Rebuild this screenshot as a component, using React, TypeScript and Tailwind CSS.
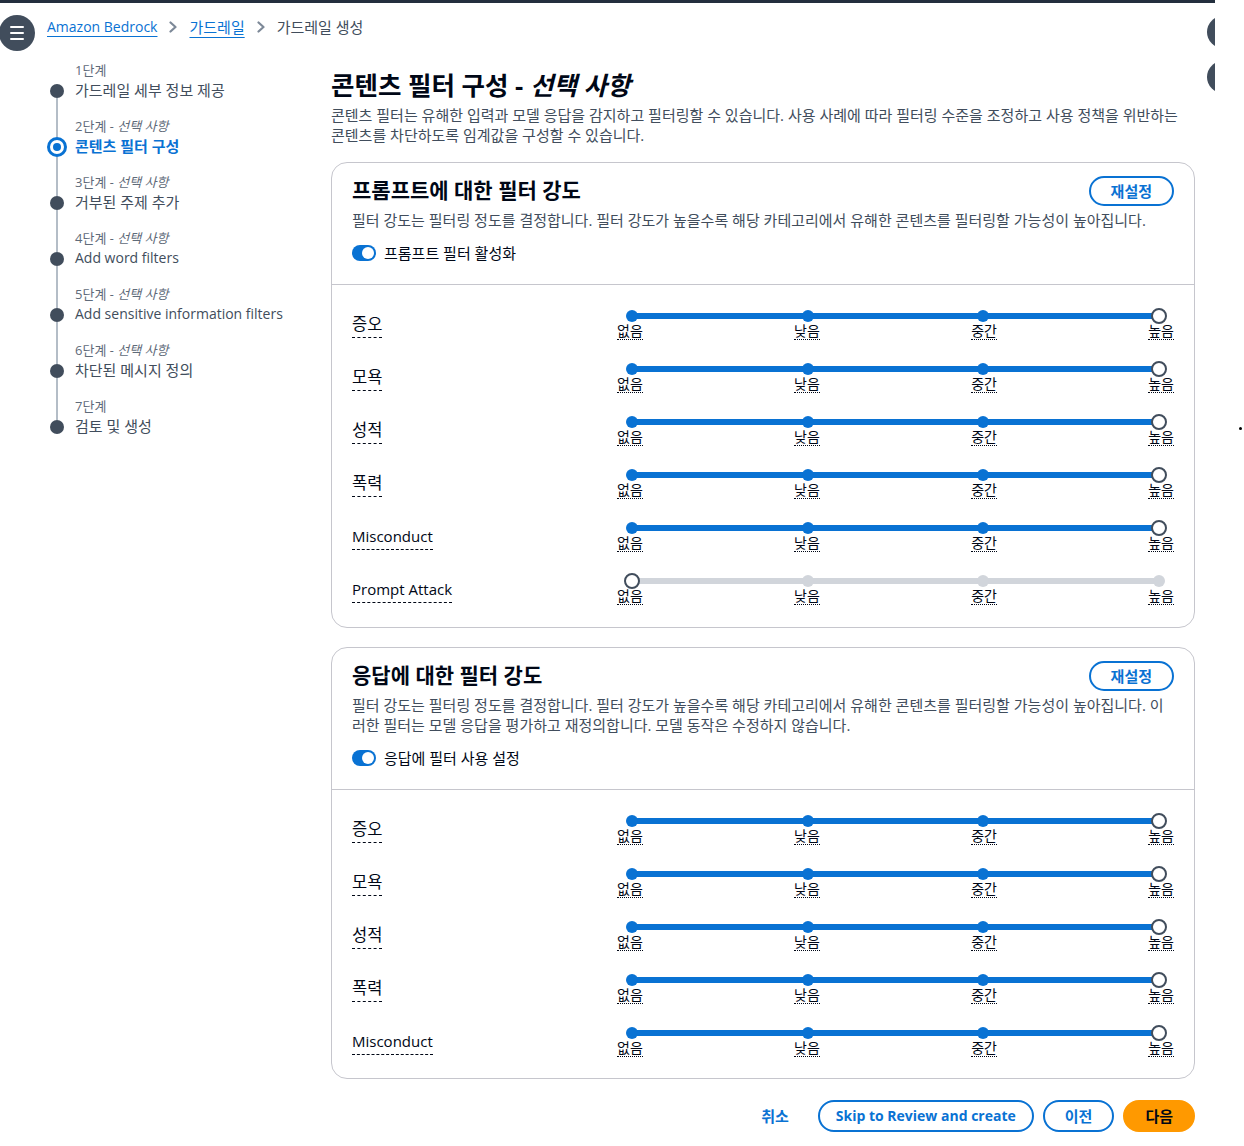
import React from "react";

function Slider({ active }: { active: boolean }) {
  const labels = ["없음", "낮음", "중간", "높음"];
  return (
    <div className="relative flex-1 pt-[13px]">
      <div
        className={
          active
            ? "absolute left-[15px] right-[15px] top-[3px] h-[6px] rounded-full bg-[#0972d3]"
            : "absolute left-[15px] right-[15px] top-[3px] h-[6px] rounded-full bg-[#d1d5db]"
        }
      />
      <div className="absolute left-[9px] right-[9px] top-0 flex justify-between">
        {labels.map((l) => (
          <span
            key={l}
            className={
              active
                ? "block w-[12px] h-[12px] rounded-full bg-[#0972d3]"
                : "block w-[12px] h-[12px] rounded-full bg-[#d1d5db]"
            }
          />
        ))}
      </div>
      <div className="flex justify-between">
        {labels.map((l) => (
          <span
            key={l}
            className="text-[14px] leading-[16px] text-[#000716] border-b border-dotted border-[#000716]"
          >
            {l}
          </span>
        ))}
      </div>
      <div
        className={
          active
            ? "absolute z-10 top-[-2px] right-[7px] w-[16px] h-[16px] rounded-full border-2 border-[#414d5c] bg-white"
            : "absolute z-10 top-[-2px] left-[7px] w-[16px] h-[16px] rounded-full border-2 border-[#414d5c] bg-white"
        }
      />
    </div>
  );
}

function Row({ label, active }: { label: string; active: boolean }) {
  const latin = /^[A-Za-z ]+$/.test(label);
  return (
    <div className="flex items-center h-[53px]">
      <div className="w-[265px] shrink-0">
        <span
          className={
            latin
              ? "inline-block text-[15px] leading-[22px] pb-[2px] text-[#000716] border-b border-dashed border-[#000716]"
              : "inline-block text-[16.5px] leading-[22px] pb-[2px] text-[#000716] border-b border-dashed border-[#000716]"
          }
        >
          {label}
        </span>
      </div>
      <Slider active={active} />
    </div>
  );
}

function Toggle({ label }: { label: string }) {
  return (
    <div className="flex items-center h-[20px]">
      <span className="inline-flex w-[24px] h-[16px] rounded-full bg-[#0972d3] items-center justify-end pr-[2px]">
        <span className="block w-[12px] h-[12px] rounded-full bg-white" />
      </span>
      <span className="ml-[8px] text-[15px] leading-[20px] text-[#000716]">{label}</span>
    </div>
  );
}

function FilterCard({
  title,
  desc,
  toggle,
  rows,
  pb,
}: {
  title: string;
  desc: string;
  toggle: string;
  rows: { label: string; active: boolean }[];
  pb: string;
}) {
  return (
    <div className="border border-[#c6c6cd] rounded-[16px] bg-white">
      <div className="px-[20px] pt-[13px] pb-[21px]">
        <div className="flex items-start justify-between">
          <h2 className="text-[21px] leading-[28px] font-bold text-[#000716]">{title}</h2>
          <button className="border-2 border-[#0972d3] rounded-full px-[20px] py-[3px] text-[15px] leading-[20px] font-bold text-[#0972d3] bg-white">
            재설정
          </button>
        </div>
        <p className="mt-[4px] text-[15px] leading-[20px] text-[#414d5c]">{desc}</p>
        <div className="mt-[13px]">
          <Toggle label={toggle} />
        </div>
      </div>
      <div className={`border-t border-[#c6c6cd] px-[20px] pt-[13px] ${pb}`}>
        {rows.map((r) => (
          <Row key={r.label} label={r.label} active={r.active} />
        ))}
      </div>
    </div>
  );
}

const steps = [
  { n: "1단계", opt: false, label: "가드레일 세부 정보 제공", latin: false },
  { n: "2단계", opt: true, label: "콘텐츠 필터 구성", active: true, latin: false },
  { n: "3단계", opt: true, label: "거부된 주제 추가", latin: false },
  { n: "4단계", opt: true, label: "Add word filters", latin: true },
  { n: "5단계", opt: true, label: "Add sensitive information filters", latin: true },
  { n: "6단계", opt: true, label: "차단된 메시지 정의", latin: false },
  { n: "7단계", opt: false, label: "검토 및 생성", latin: false },
];

function Chevron() {
  return (
    <svg width="10" height="12" viewBox="0 0 10 12" className="mx-[11px]">
      <path d="M2.5 1.5 L7.5 6 L2.5 10.5" fill="none" stroke="#7d8998" strokeWidth="2.2" strokeLinecap="round" strokeLinejoin="round" />
    </svg>
  );
}

export default function App() {
  const promptRows = [
    { label: "증오", active: true },
    { label: "모욕", active: true },
    { label: "성적", active: true },
    { label: "폭력", active: true },
    { label: "Misconduct", active: true },
    { label: "Prompt Attack", active: false },
  ];
  const respRows = promptRows.slice(0, 5);
  return (
    <div className="relative w-full min-h-[1146px] bg-white font-['Open_Sans','Noto_Sans_CJK_KR',sans-serif]">
      <div className="relative w-[1215px] overflow-hidden pb-[15px]">
        <div className="h-[3px] bg-[#232f3e]" />
        {/* hamburger */}
        <div className="absolute left-[-1px] top-[15px] w-[36px] h-[36px] rounded-full bg-[#414d5c] flex flex-col items-center justify-center gap-[3.5px]">
          <span className="block w-[14px] h-[2.5px] bg-white rounded" />
          <span className="block w-[14px] h-[2.5px] bg-white rounded" />
          <span className="block w-[14px] h-[2.5px] bg-white rounded" />
        </div>
        {/* right clipped circles */}
        <div className="absolute right-[-24px] top-[16px] w-[32px] h-[32px] rounded-full bg-[#414d5c]" />
        <div className="absolute right-[-24px] top-[61px] w-[32px] h-[32px] rounded-full bg-[#414d5c]" />

        {/* breadcrumb */}
        <div className="pt-[7px] pl-[47px] flex items-center h-[34px] box-content leading-[20px]">
          <span className="text-[14px] text-[#0972d3] underline underline-offset-[4px] decoration-[1px]">Amazon Bedrock</span>
          <Chevron />
          <span className="text-[15px] text-[#0972d3] underline underline-offset-[4px] decoration-[1px]">가드레일</span>
          <Chevron />
          <span className="text-[15px] text-[#414d5c]">가드레일 생성</span>
        </div>

        <div className="flex">
          {/* side nav */}
          <nav className="w-[331px] shrink-0 pl-[50px] pt-[18px]">
            {steps.map((s, i) => {
              const first = i === 0;
              const last = i === steps.length - 1;
              return (
                <div key={s.n} className="flex">
                  <div className="w-[14px] shrink-0 flex flex-col items-center">
                    <div
                      className={
                        (s.active ? "h-[19px] " : "h-[22px] ") +
                        (first ? "w-[2px] bg-transparent" : "w-[2px] bg-[#b4bdc7]")
                      }
                    />
                    {s.active ? (
                      <span className="flex items-center justify-center w-[20px] h-[20px] rounded-full border-[3px] border-[#0972d3] bg-white shrink-0">
                        <span className="block w-[8px] h-[8px] rounded-full bg-[#0972d3]" />
                      </span>
                    ) : (
                      <span className="block w-[14px] h-[14px] rounded-full bg-[#414d5c] shrink-0" />
                    )}
                    <div className={last ? "w-[2px] flex-1 bg-transparent" : "w-[2px] flex-1 bg-[#b4bdc7]"} />
                  </div>
                  <div className="ml-[11px] pb-[18px]">
                    <div className="text-[13px] leading-[16px] text-[#5f6b7a]">
                      {s.n}
                      {s.opt && <i> - 선택 사항</i>}
                    </div>
                    <div
                      className={
                        (s.latin ? "text-[14px] " : "text-[15px] ") +
                        (s.active
                          ? "mt-[2px] leading-[20px] text-[#0972d3] font-bold"
                          : "mt-[2px] leading-[20px] text-[#414d5c]")
                      }
                    >
                      {s.label}
                    </div>
                  </div>
                </div>
              );
            })}
          </nav>

          {/* main */}
          <main className="w-[864px] shrink-0 pt-[25px]">
            <h1 className="text-[25.5px] leading-[32px] font-bold text-[#000716]">
              콘텐츠 필터 구성 - <i>선택 사항</i>
            </h1>
            <p className="mt-[4px] text-[15px] leading-[20px] text-[#414d5c]">
              콘텐츠 필터는 유해한 입력과 모델 응답을 감지하고 필터링할 수 있습니다. 사용 사례에 따라 필터링 수준을 조정하고 사용 정책을 위반하는 콘텐츠를 차단하도록 임계값을 구성할 수 있습니다.
            </p>
            <div className="mt-[17px]">
              <FilterCard
                title="프롬프트에 대한 필터 강도"
                desc="필터 강도는 필터링 정도를 결정합니다. 필터 강도가 높을수록 해당 카테고리에서 유해한 콘텐츠를 필터링할 가능성이 높아집니다."
                toggle="프롬프트 필터 활성화"
                rows={promptRows}
                pb="pb-[11px]"
              />
            </div>
            <div className="mt-[19px]">
              <FilterCard
                title="응답에 대한 필터 강도"
                desc="필터 강도는 필터링 정도를 결정합니다. 필터 강도가 높을수록 해당 카테고리에서 유해한 콘텐츠를 필터링할 가능성이 높아집니다. 이러한 필터는 모델 응답을 평가하고 재정의합니다. 모델 동작은 수정하지 않습니다."
                toggle="응답에 필터 사용 설정"
                rows={respRows}
                pb="pb-[10px]"
              />
            </div>
            <div className="mt-[21px] flex justify-end gap-[9px] leading-[20px] font-bold">
              <button className="px-[20px] py-[6px] text-[15px] text-[#0972d3]">취소</button>
              <button className="px-[16px] py-[4px] text-[14px] border-2 border-[#0972d3] rounded-full text-[#0972d3] bg-white">
                Skip to Review and create
              </button>
              <button className="px-[20px] py-[4px] text-[15px] border-2 border-[#0972d3] rounded-full text-[#0972d3] bg-white">
                이전
              </button>
              <button className="px-[20px] py-[4px] text-[15px] border-2 border-[#ff9900] rounded-full text-[#000716] bg-[#ff9900]">
                다음
              </button>
            </div>
          </main>
        </div>
      </div>
      <span className="absolute left-[1239px] top-[427px] block w-[3px] h-[3px] rounded-full bg-black" />
    </div>
  );
}
